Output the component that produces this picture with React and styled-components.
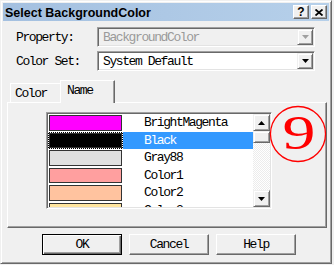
import React from 'react';
import styled, { createGlobalStyle } from 'styled-components';

const Global = createGlobalStyle`
  html, body { margin: 0; padding: 0; background: #f0f0f0; }
  body { width: 334px; height: 265px; overflow: hidden; }
`;

const MONO = `"Liberation Mono", "Courier New", monospace`;

const Window = styled.div`
  box-sizing: border-box;
  width: 332px;
  height: 264px;
  background: #f0f0f0;
  border: 1px solid;
  border-color: #f0f0f0 #696969 #696969 #f0f0f0;
  box-shadow: inset 1px 1px 0 #fff, inset -1px -1px 0 #a0a0a0;
  padding: 2px;
  display: flex;
  flex-direction: column;
  font-family: ${MONO};
  font-size: 13px;
  letter-spacing: -1.4px;
  color: #000;
`;

const TitleBar = styled.div`
  height: 18px;
  display: flex;
  align-items: center;
  padding-left: 2px;
  background: linear-gradient(to right, #a4c0e0, #b6d0ea);
`;

const TitleText = styled.div`
  flex: 1;
  font-family: "Liberation Sans", Arial, sans-serif;
  font-weight: bold;
  font-size: 12.5px;
  letter-spacing: 0;
  color: #000;
  padding-top: 1px;
`;

const CapButton = styled.div`
  box-sizing: border-box;
  width: 16px;
  height: 14px;
  margin-left: ${p => p.$gap}px;
  margin-right: ${p => (p.$end ? 2 : 0)}px;
  background: #f0f0f0;
  border: 1px solid;
  border-color: #fff #696969 #696969 #fff;
  box-shadow: inset -1px -1px 0 #a0a0a0;
  display: flex;
  align-items: center;
  justify-content: center;
  font-family: "Liberation Sans", Arial, sans-serif;
  font-weight: bold;
  font-size: 12px;
  letter-spacing: 0;
  line-height: 1;
`;

const Form = styled.div`
  display: grid;
  grid-template-columns: 81px 218px;
  row-gap: 4px;
  margin: 6px 0 0 13px;
`;

const Label = styled.div`
  display: flex;
  align-items: center;
  height: 20px;
  white-space: pre;
`;

const Combo = styled.div`
  box-sizing: border-box;
  height: 20px;
  display: flex;
  border: 1px solid;
  border-color: #a0a0a0 #fff #fff #a0a0a0;
  box-shadow: inset 1px 1px 0 #696969, inset -1px -1px 0 #e3e3e3;
  padding: 1px;
  background: ${p => (p.$disabled ? '#f0f0f0' : '#fff')};
`;

const ComboText = styled.div`
  flex: 1;
  display: flex;
  align-items: center;
  padding-left: 4px;
  color: ${p => (p.$disabled ? '#9a9a9a' : '#000')};
  white-space: pre;
`;

const DropButton = styled.div`
  box-sizing: border-box;
  width: 16px;
  background: #f0f0f0;
  border: 1px solid;
  border-color: #f0f0f0 #696969 #696969 #f0f0f0;
  box-shadow: inset 1px 1px 0 #fff, inset -1px -1px 0 #a0a0a0;
  display: flex;
  align-items: center;
  justify-content: center;
`;

const TabArea = styled.div`
  margin: 9px 0 0 4px;
  display: flex;
  flex-direction: column;
`;

const TabStrip = styled.div`
  display: flex;
  align-items: flex-end;
  height: 22px;
  padding-left: 3px;
  position: relative;
  z-index: 1;
`;

const Tab = styled.div`
  box-sizing: border-box;
  width: ${p => p.$w}px;
  height: ${p => (p.$active ? 23 : 19)}px;
  margin-bottom: ${p => (p.$active ? -1 : 0)}px;
  background: #f0f0f0;
  border-top: 1px solid #fff;
  border-left: 1px solid #fff;
  border-right: ${p => (p.$active ? '1px solid #696969' : '0')};
  box-shadow: ${p => (p.$active ? 'inset -1px 0 0 #a0a0a0' : 'none')};
  padding-left: ${p => (p.$active ? 6 : 4)}px;
  padding-top: ${p => (p.$active ? 2 : 2)}px;
  white-space: pre;
`;

const Panel = styled.div`
  position: relative;
  box-sizing: border-box;
  width: 320px;
  height: 126px;
  border: 1px solid;
  border-color: #fff #696969 #696969 #fff;
  box-shadow: inset -1px -1px 0 #a0a0a0;
  padding: 9px 0 0 38px;
`;

const ListBox = styled.div`
  box-sizing: border-box;
  width: 226px;
  height: 97px;
  border: 1px solid;
  border-color: #a0a0a0 #fff #fff #a0a0a0;
  box-shadow: inset 1px 1px 0 #696969, inset -1px -1px 0 #e3e3e3;
  padding: 1px;
  display: flex;
  background: #fff;
`;

const Rows = styled.div`
  flex: 1;
  overflow: hidden;
  display: flex;
  flex-direction: column;
`;

const Row = styled.div`
  flex: 0 0 17.5px;
  display: flex;
  align-items: stretch;
`;

const SwatchCell = styled.div`
  box-sizing: border-box;
  width: 75px;
  padding: 1px;
  background: ${p => (p.$selected ? p.$color : '#fff')};
  outline: ${p => (p.$selected ? '1px dotted #fff' : 'none')};
  outline-offset: -1px;
`;

const Swatch = styled.div`
  box-sizing: border-box;
  height: 100%;
  border: 1px solid #333;
  background: ${p => p.$color};
`;

const RowText = styled.div`
  flex: 1;
  display: flex;
  align-items: center;
  padding-left: 21px;
  background: ${p => (p.$selected ? '#3399ff' : 'transparent')};
  color: ${p => (p.$selected ? '#fff' : '#000')};
  white-space: pre;
`;

const ScrollBar = styled.div`
  width: 17px;
  display: flex;
  flex-direction: column;
  background-color: #fff;
  background-image: conic-gradient(#ececec 25%, #fff 0 50%, #ececec 0 75%, #fff 0);
  background-size: 2px 2px;
`;

const ScrollBtn = styled.div`
  box-sizing: border-box;
  height: ${p => p.$h}px;
  background: #f0f0f0;
  border: 1px solid;
  border-color: #f0f0f0 #696969 #696969 #f0f0f0;
  box-shadow: inset 1px 1px 0 #fff, inset -1px -1px 0 #a0a0a0;
  display: flex;
  align-items: center;
  justify-content: center;
`;

const Track = styled.div`
  flex: 1;
`;

const Badge = styled.svg`
  position: absolute;
  left: 261px;
  top: 2px;
`;

const ButtonRow = styled.div`
  display: flex;
  gap: 7px;
  margin: 6px 0 0 39px;
`;

const PushButton = styled.div`
  box-sizing: border-box;
  width: 80px;
  height: 21px;
  background: #f0f0f0;
  display: flex;
  align-items: center;
  justify-content: center;
  border: 1px solid;
  border-color: ${p => (p.$default ? '#000' : '#fff #696969 #696969 #fff')};
  box-shadow: ${p =>
    p.$default
      ? 'inset 1px 1px 0 #fff, inset -1px -1px 0 #696969, inset -2px -2px 0 #a0a0a0'
      : 'inset -1px -1px 0 #a0a0a0'};
  white-space: pre;
`;

const Arrow = ({ dir = 'down', color = '#000' }) => (
  <svg width="7" height="4" viewBox="0 0 7 4">
    {dir === 'down' ? (
      <polygon points="0,0 7,0 3.5,4" fill={color} />
    ) : (
      <polygon points="0,4 7,4 3.5,0" fill={color} />
    )}
  </svg>
);

const items = [
  { name: 'BrightMagenta', color: '#ff00ff' },
  { name: 'Black', color: '#000000', selected: true },
  { name: 'Gray88', color: '#e0e0e0' },
  { name: 'Color1', color: '#ff9f9f' },
  { name: 'Color2', color: '#ffc39f' },
  { name: 'Color3', color: '#ffe59f' },
];

export default function App() {
  return (
    <>
      <Global />
      <Window>
        <TitleBar>
          <TitleText>Select BackgroundColor</TitleText>
          <CapButton $gap={0}>?</CapButton>
          <CapButton $gap={2} $end>
            <svg width="8" height="7" viewBox="0 0 8 7">
              <path d="M0.5 0.5 L7.5 6.5 M7.5 0.5 L0.5 6.5" stroke="#000" strokeWidth="1.8" />
            </svg>
          </CapButton>
        </TitleBar>

        <Form>
          <Label>Property:</Label>
          <Combo $disabled>
            <ComboText $disabled>BackgroundColor</ComboText>
            <DropButton>
              <Arrow color="#a0a0a0" />
            </DropButton>
          </Combo>
          <Label>Color Set:</Label>
          <Combo>
            <ComboText>System Default</ComboText>
            <DropButton>
              <Arrow />
            </DropButton>
          </Combo>
        </Form>

        <TabArea>
          <TabStrip>
            <Tab $w={50}>Color</Tab>
            <Tab $w={55} $active>Name</Tab>
          </TabStrip>
          <Panel>
            <ListBox>
              <Rows>
                {items.map(it => (
                  <Row key={it.name}>
                    <SwatchCell $selected={it.selected} $color={it.color}>
                      <Swatch $color={it.color} />
                    </SwatchCell>
                    <RowText $selected={it.selected}>{it.name}</RowText>
                  </Row>
                ))}
              </Rows>
              <ScrollBar>
                <ScrollBtn $h={17}>
                  <Arrow dir="up" />
                </ScrollBtn>
                <ScrollBtn $h={12} />
                <Track />
                <ScrollBtn $h={17}>
                  <Arrow />
                </ScrollBtn>
              </ScrollBar>
            </ListBox>
            <Badge width="58" height="58" viewBox="0 0 58 58">
              <circle cx="29" cy="29" r="27.5" fill="none" stroke="#ff0000" strokeWidth="1.3" />
              <text
                x="29"
                y="44"
                textAnchor="middle"
                fontFamily='"Liberation Serif", "Times New Roman", serif'
                fontSize="48"
                fill="#ff0000"
                textLength="31"
                lengthAdjust="spacingAndGlyphs"
              >
                9
              </text>
            </Badge>
          </Panel>
        </TabArea>

        <ButtonRow>
          <PushButton $default>OK</PushButton>
          <PushButton>Cancel</PushButton>
          <PushButton>Help</PushButton>
        </ButtonRow>
      </Window>
    </>
  );
}
